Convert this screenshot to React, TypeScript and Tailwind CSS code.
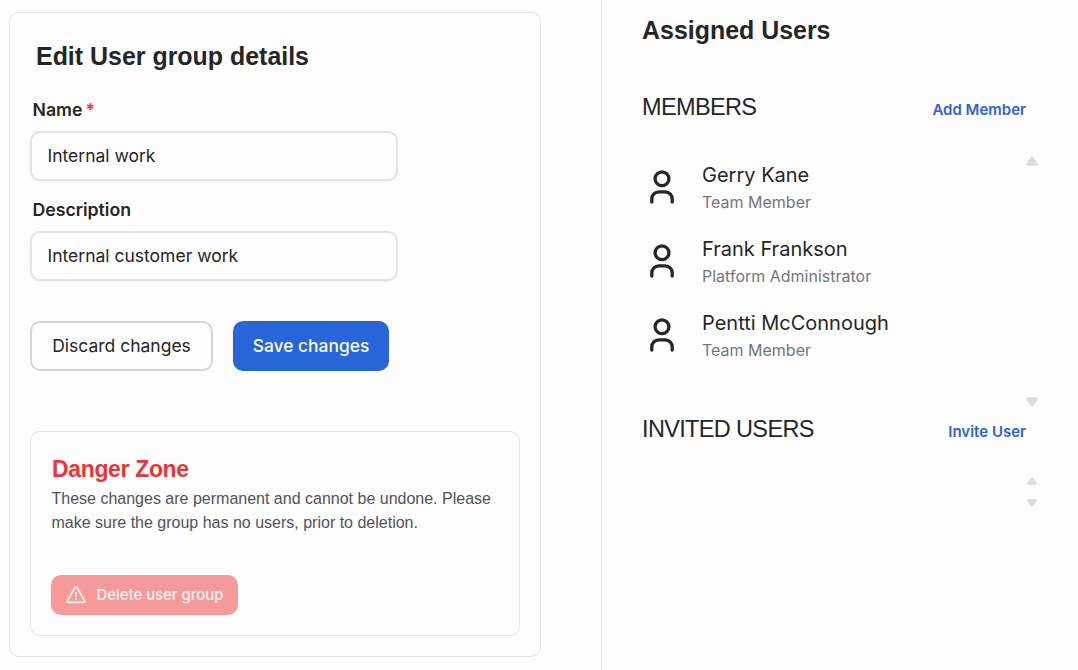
import React from "react";

const arial = "font-['Liberation_Sans',Arial,sans-serif]";

type Member = { name: string; role: string };

const members: Member[] = [
  { name: "Gerry Kane", role: "Team Member" },
  { name: "Frank Frankson", role: "Platform Administrator" },
  { name: "Pentti McConnough", role: "Team Member" },
];

function PersonIcon() {
  return (
    <svg className="h-[36px] w-[26px]" viewBox="0 0 26 36" fill="none" stroke="#262626" strokeWidth="3.3" strokeLinecap="round">
      <circle cx="13" cy="9.7" r="6.9" />
      <path d="M2.8 33v-3.2a7 7 0 0 1 7-7h6.4a7 7 0 0 1 7 7V33" />
    </svg>
  );
}

function WarningIcon() {
  return (
    <svg className="h-5 w-5" viewBox="0 0 20 20" fill="none" stroke="#fdf0f0" strokeWidth="1.8" strokeLinecap="round" strokeLinejoin="round">
      <path d="M8.9 2.8 1.6 15.4a1.25 1.25 0 0 0 1.1 1.9h14.6a1.25 1.25 0 0 0 1.1-1.9L11.1 2.8a1.27 1.27 0 0 0-2.2 0Z" />
      <path d="M10 7.6v3.6" />
      <path d="M10 14h.01" />
    </svg>
  );
}

function Arrow({ down = false, small = false }: { down?: boolean; small?: boolean }) {
  return (
    <svg
      className={`${small ? "h-[8px] w-[10px]" : "h-[10px] w-[12px]"} ${down ? "rotate-180" : ""}`}
      viewBox="0 0 12 10"
      preserveAspectRatio="none"
      fill="#dcdcde"
      stroke="#dcdcde"
      strokeWidth="2.8"
      strokeLinejoin="round"
    >
      <path d="M6 1.9 10.5 8.3H1.5Z" />
    </svg>
  );
}

function Field({ label, value, required = false }: { label: string; value: string; required?: boolean }) {
  return (
    <label className="flex h-[100px] flex-col">
      <span className="flex h-[32px] gap-[4px] pl-[2.5px] text-[17.7px] font-semibold leading-[22px] text-[#262626]">
        {label}
        {required && <span className="-ml-px text-[#ee3535]">*</span>}
      </span>
      <input
        className="h-[50px] w-[368px] rounded-[10px] border-2 border-[#e4e4e6] bg-[#fdfdfd] px-[15.5px] pb-[2px] text-[17.5px] text-[#262626] shadow-[0_1px_2px_rgba(0,0,0,0.05)] outline-none"
        defaultValue={value}
      />
    </label>
  );
}

function SectionHeader({ title, action }: { title: string; action: string }) {
  return (
    <div className="flex h-[32px] items-center justify-between">
      <h3 className={`${arial} whitespace-nowrap text-[23.5px] leading-[32px] tracking-[-0.65px] text-[#262626]`}>{title}</h3>
      <button className="mt-[5px] whitespace-nowrap text-[15px] font-semibold leading-[20px] text-[#3360d6]">{action}</button>
    </div>
  );
}

export default function App() {
  return (
    <div className="flex h-[670px] w-[1078px] overflow-hidden bg-[#fdfdfd] font-['Inter',sans-serif] text-[#262626]">
      <div className="w-[601px] shrink-0 pl-[9px] pt-[12px]">
        <section className="h-[645px] w-[532px] rounded-[10px] border border-[#e6e6ea] pl-[20px] pt-[27px]">
          <h2 className={`${arial} mb-[27px] h-[32px] whitespace-nowrap pl-[6px] text-[24.95px] font-bold leading-[32px]`}>
            Edit User group details
          </h2>
          <Field label="Name" value="Internal work" required />
          <Field label="Description" value="Internal customer work" />
          <div className="mt-[22px] flex gap-[20px]">
            <button className="h-[50px] w-[183px] whitespace-nowrap rounded-[10px] border-2 border-[#d5d5da] text-[17.5px]">Discard changes</button>
            <button className="h-[50px] w-[156px] whitespace-nowrap rounded-[10px] bg-[#2765d8] text-[17.4px] font-medium text-[#fdfdfd]">
              Save changes
            </button>
          </div>
          <div className="mt-[60px] h-[205px] w-[490px] rounded-[10px] border border-[#e6e6ea] px-[20px] pt-[21px]">
            <h3 className={`${arial} h-[33px] whitespace-nowrap pl-px text-[23px] font-bold leading-[32px] tracking-[-0.35px] text-[#eb3434]`}>Danger Zone</h3>
            <p className={`${arial} whitespace-nowrap pl-[0.5px] pt-px text-[16px] leading-[24px] text-[#52525b]`}>
              These changes are permanent and cannot be undone. Please
              <br />
              make sure the group has no users, prior to deletion.
            </p>
            <button className="mt-[40px] flex h-[40px] w-[187px] items-center gap-[10.5px] whitespace-nowrap rounded-[10px] bg-[#f49a9a] pl-[15px] text-[14.9px] font-medium text-[#fdf0f0]">
              <WarningIcon />
              Delete user group
            </button>
          </div>
        </section>
      </div>
      <aside className="flex-1 border-l border-[#e6e6ea] pl-[40px] pr-[40.5px]">
        <h2 className={`${arial} mt-[14px] h-[32px] whitespace-nowrap text-[24.95px] font-bold leading-[32px]`}>Assigned Users</h2>
        <div className="mt-[45px] pr-[11.5px]">
          <SectionHeader title="MEMBERS" action="Add Member" />
        </div>
        <div className="mt-[33px] flex h-[251px] justify-between">
          <ul className="pt-[13px]">
            {members.map((m) => (
              <li key={m.name} className="flex h-[74px] pl-[7px]">
                <PersonIcon />
                <div className="ml-[27px] -mt-[8px] whitespace-nowrap">
                  <div className="text-[20px] leading-[28px]">{m.name}</div>
                  <div className="text-[16px] leading-[26px] text-[#75757c]">{m.role}</div>
                </div>
              </li>
            ))}
          </ul>
          <div className="flex flex-col justify-between">
            <Arrow />
            <Arrow down />
          </div>
        </div>
        <div className="mt-[6px] pr-[11.5px]">
          <SectionHeader title="INVITED USERS" action="Invite User" />
        </div>
        <div className="mt-[32px] flex h-[30px] flex-col items-end justify-between pr-[1px]">
          <Arrow small />
          <Arrow small down />
        </div>
      </aside>
    </div>
  );
}
